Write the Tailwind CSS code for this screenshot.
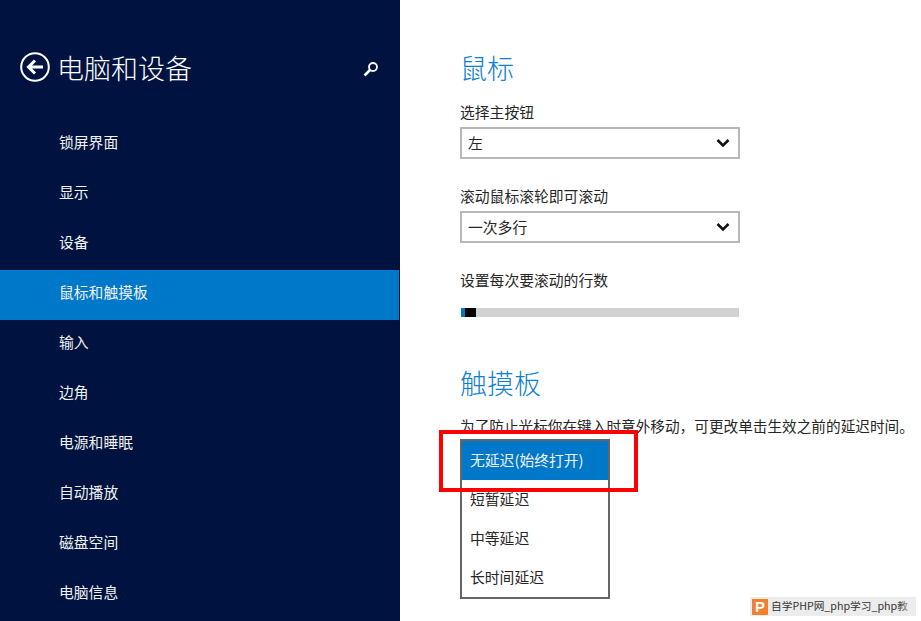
<!DOCTYPE html>
<html lang="zh">
<head>
<meta charset="utf-8">
<script src="https://cdn.jsdelivr.net/npm/@tailwindcss/browser@4"></script>
</head>
<body class="m-0 overflow-hidden bg-white font-['Noto_Sans_CJK_SC','Liberation_Sans',sans-serif]">
<div class="relative flex h-[621px] w-[921px] overflow-hidden">
  <aside class="flex h-full w-[400px] shrink-0 flex-col bg-[#001240] pr-px text-white">
    <header class="flex h-[120px] items-start pt-[48px]">
      <svg class="ml-5 mt-[4px] h-[30px] w-[30px] shrink-0" viewBox="0 0 30 30" fill="none" stroke="white">
        <circle cx="15" cy="15" r="13.8" stroke-width="2"/>
        <path d="M23 15H9M15 8.500 8.500 15 15 21.500" stroke-width="3"/>
      </svg>
      <h1 class="ml-[7px] text-[27px] leading-[40px] font-light">电脑和设备</h1>
      <svg class="ml-auto mr-[20px] mt-[13px] h-[16px] w-[16px]" viewBox="0 0 16 16" fill="none" stroke="white">
        <circle cx="10" cy="6" r="4" stroke-width="1.8"/>
        <path d="M7 9 1.500 14.500" stroke-width="2.6"/>
      </svg>
    </header>
    <nav class="flex flex-col text-[14.8px] text-[#f2f2f2]">
      <a class="flex h-[50px] items-center pb-[5px] pl-[59px]">锁屏界面</a>
      <a class="flex h-[50px] items-center pb-[5px] pl-[59px]">显示</a>
      <a class="flex h-[50px] items-center pb-[5px] pl-[59px]">设备</a>
      <a class="flex h-[50px] items-center bg-[#0078c9] pb-[5px] pl-[59px]">鼠标和触摸板</a>
      <a class="flex h-[50px] items-center pb-[5px] pl-[59px]">输入</a>
      <a class="flex h-[50px] items-center pb-[5px] pl-[59px]">边角</a>
      <a class="flex h-[50px] items-center pb-[5px] pl-[59px]">电源和睡眠</a>
      <a class="flex h-[50px] items-center pb-[5px] pl-[59px]">自动播放</a>
      <a class="flex h-[50px] items-center pb-[5px] pl-[59px]">磁盘空间</a>
      <a class="flex h-[50px] items-center pb-[5px] pl-[59px]">电脑信息</a>
    </nav>
  </aside>
  <main class="flex-1 pl-[60px] text-[14.8px] text-[#262626]">
    <h2 class="mt-[48px] h-[40px] text-[27px] leading-[40px] font-light text-[#0f7fcf]">鼠标</h2>
    <div class="mt-[13px] h-[22px] leading-[22px]">选择主按钮</div>
    <div class="mt-[4px] flex h-[32px] w-[280px] items-center justify-between border-2 border-[#b8b8b8] pl-[6px] pr-[8px]">
      <span>左</span>
      <svg class="h-[10px] w-[14px]" viewBox="0 0 14 10" fill="none" stroke="#111" stroke-width="2.6"><path d="M1.500 2 7 7.500 12.500 2"/></svg>
    </div>
    <div class="mt-[26px] h-[22px] leading-[22px]">滚动鼠标滚轮即可滚动</div>
    <div class="mt-[4px] flex h-[32px] w-[280px] items-center justify-between border-2 border-[#b8b8b8] pl-[6px] pr-[8px]">
      <span>一次多行</span>
      <svg class="h-[10px] w-[14px]" viewBox="0 0 14 10" fill="none" stroke="#111" stroke-width="2.6"><path d="M1.500 2 7 7.500 12.500 2"/></svg>
    </div>
    <div class="mt-[26px] h-[22px] leading-[22px]">设置每次要滚动的行数</div>
    <div class="ml-px mt-[17px] flex h-[9px] w-[278px] bg-[#d2d2d2]">
      <span class="w-[4px] bg-[#0078c9]"></span>
      <span class="w-[11px] bg-black"></span>
    </div>
    <h2 class="mt-[46px] h-[40px] text-[27px] leading-[40px] font-light text-[#0f7fcf]">触摸板</h2>
    <div class="mt-[12px] h-[22px] whitespace-nowrap text-[14.65px] leading-[22px]">为了防止光标你在键入时意外移动，可更改单击生效之前的延迟时间。</div>
    <ul class="mt-[2px] h-[160px] w-[150px] border-2 border-[#666]">
      <li class="flex h-[39px] items-center bg-[#0078c9] pl-[8px] text-[#f2f2f2]">无延迟(始终打开)</li>
      <li class="flex h-[39px] items-center pl-[8px]">短暂延迟</li>
      <li class="flex h-[39px] items-center pl-[8px]">中等延迟</li>
      <li class="flex h-[39px] items-center pl-[8px]">长时间延迟</li>
    </ul>
  </main>
  <div class="absolute left-[439px] top-[430px] h-[62px] w-[199px] border-4 border-[#ff0000]"></div>
  <div class="absolute bottom-[5px] left-[750px] flex h-[19px] w-[166px] items-center overflow-hidden bg-[#ececec] pl-[2px]">
    <span class="flex h-[16px] w-[16px] shrink-0 items-center justify-center bg-[#f47f2c] text-[15px] leading-none font-bold text-white font-['Liberation_Sans',sans-serif]">P</span>
    <span class="ml-[3px] whitespace-nowrap text-[10.7px] leading-none text-[#333]">自学PHP网_php学习_php教</span>
    <span class="absolute right-0 top-0 h-full w-[18px] bg-gradient-to-r from-[#ececec]/0 to-[#ececec]"></span>
  </div>
</div>
</body>
</html>
